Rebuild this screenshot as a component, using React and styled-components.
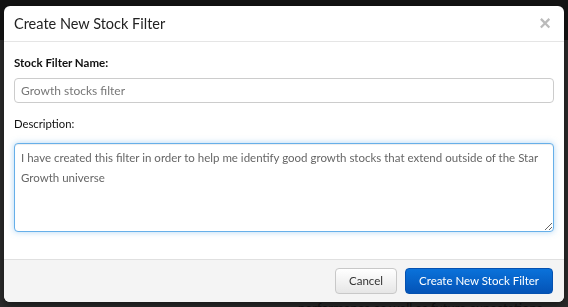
import React from 'react';
import styled, { createGlobalStyle } from 'styled-components';

const GlobalStyle = createGlobalStyle`
  html, body {
    margin: 0;
    padding: 0;
    height: 100%;
    background: #2b2b2b;
    font-family: Lato, "Open Sans", sans-serif;
    overflow: hidden;
  }
  * { box-sizing: border-box; }
`;

const Page = styled.div`
  height: 307px;
  display: flex;
  flex-direction: column;
  background: #2c2c2c;
`;

const TopBar = styled.div`
  height: 40px;
  background: #141414;
`;

const PageText = styled.p`
  margin: auto 0 -9px 298px;
  font-size: 13px;
  color: #141414;
`;

const Backdrop = styled.div`
  position: fixed;
  inset: 0;
  padding: 6px 4px 0 4px;
  display: flex;
  align-items: flex-start;
`;

const Dialog = styled.div`
  width: 560px;
  background: #fff;
  border-radius: 6px;
  overflow: hidden;
  box-shadow: 0 3px 9px rgba(0, 0, 0, 0.5);
`;

const Header = styled.div`
  height: 36px;
  padding: 0 13px 0 10px;
  display: flex;
  align-items: center;
  justify-content: space-between;
  border-bottom: 1px solid #e5e5e5;
`;

const Title = styled.h4`
  margin: 0;
  font-size: 14.5px;
  font-weight: 400;
  color: #222;
`;

const Close = styled.button`
  border: 0;
  background: none;
  padding: 0;
  font-size: 20px;
  font-weight: 700;
  line-height: 1;
  color: #bbb;
  margin-top: -2px;
  font-family: Arial, "Liberation Sans", sans-serif;
`;

const Body = styled.div`
  padding: 13px 10px 27px 10px;
  display: flex;
  flex-direction: column;
`;

const Label = styled.label`
  font-size: ${(p) => (p.bold ? 11.5 : 11.3)}px;
  font-weight: ${(p) => (p.bold ? 700 : 400)};
  color: #111;
  line-height: 16px;
  margin-bottom: ${(p) => (p.bold ? 7 : 11)}px;
`;

const Input = styled.input`
  height: 25px;
  width: 100%;
  border: 1px solid #ccc;
  border-radius: 4px;
  padding: 0 6px;
  font-family: inherit;
  font-size: 12px;
  color: #777;
  margin-bottom: 13px;
  outline: none;
`;

const TextArea = styled.textarea`
  height: 89px;
  width: 100%;
  border: 1px solid #66afe9;
  border-radius: 4px;
  padding: 4px 6px;
  font-family: inherit;
  font-size: 11.5px;
  line-height: 20px;
  color: #666;
  outline: none;
  resize: vertical;
  box-shadow: inset 0 1px 1px rgba(0, 0, 0, 0.075), 0 0 6px rgba(102, 175, 233, 0.5);
`;

const Footer = styled.div`
  height: 43px;
  background: #f4f4f4;
  border-top: 1px solid #e0e0e0;
  display: flex;
  align-items: center;
  justify-content: flex-end;
  gap: 8px;
  padding: 0 11px 1px 0;
`;

const Button = styled.button`
  height: 26px;
  padding: 0 13px;
  border-radius: 4px;
  font-family: inherit;
  font-size: 11.5px;
  border: 1px solid ${(p) => (p.primary ? '#0551b0' : '#c8c8c8')};
  color: ${(p) => (p.primary ? '#fff' : '#333')};
  background: ${(p) =>
    p.primary
      ? 'linear-gradient(#0a72da, #0453b6)'
      : 'linear-gradient(#fff, #e6e6e6)'};
`;

export default function App() {
  return (
    <>
      <GlobalStyle />
      <Page>
        <TopBar />
        <PageText>performance as well as future expectations</PageText>
      </Page>
      <Backdrop>
        <Dialog>
          <Header>
            <Title>Create New Stock Filter</Title>
            <Close>×</Close>
          </Header>
          <Body>
            <Label bold>Stock Filter Name:</Label>
            <Input defaultValue="Growth stocks filter" />
            <Label>Description:</Label>
            <TextArea defaultValue="I have created this filter in order to help me identify good growth stocks that extend outside of the Star Growth universe" />
          </Body>
          <Footer>
            <Button>Cancel</Button>
            <Button primary>Create New Stock Filter</Button>
          </Footer>
        </Dialog>
      </Backdrop>
    </>
  );
}
